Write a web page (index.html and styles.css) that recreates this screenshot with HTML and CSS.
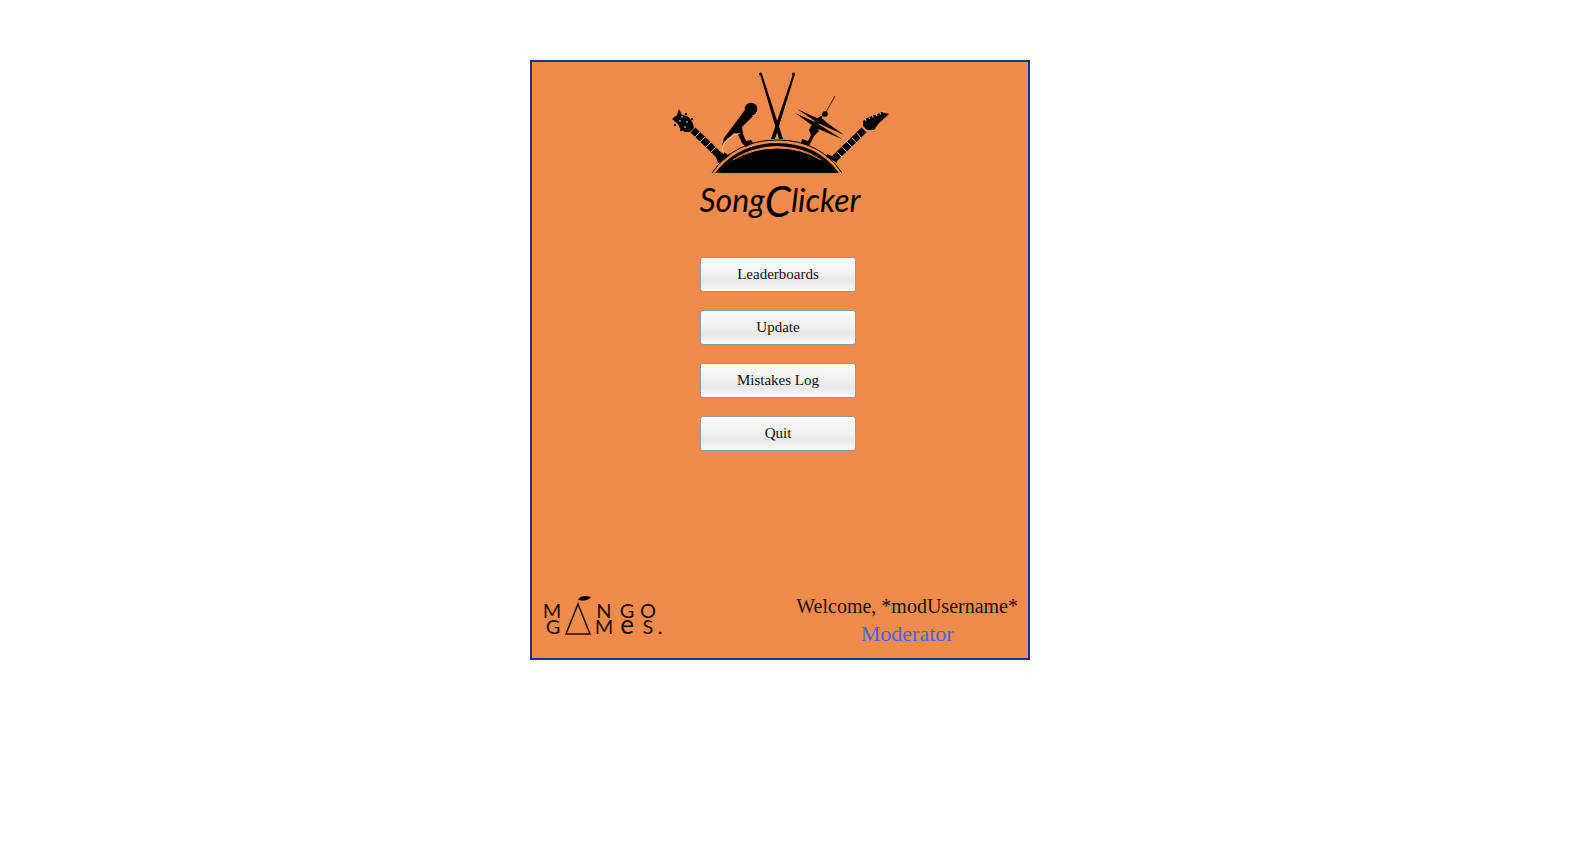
FILE: index.html
```html
<!DOCTYPE html>
<html lang="en">
<head>
<meta charset="utf-8">
<title>SongClicker</title>
<link rel="stylesheet" href="styles.css">
</head>
<body>
<main class="panel">
  <header class="brand">
    <svg class="emblem" viewBox="669 70 222 104" role="img" aria-label="Drum, guitars, microphone and cymbals">
      <!-- drum -->
      <path d="M718 173Q737 149 777 148Q818 149 837 173Z"/>
      <path class="line" d="M712 173Q735 140 777 140Q820 140 842 173"/>
      <path d="M715 173Q738 143 777 143Q817 143 839 173H837Q814 147 777 146Q740 147 718 173Z"/>
      <path class="rim" d="M733 160Q753 148 777 148Q802 148 821 160"/>
      <!-- drumsticks -->
      <path d="M760 74L762 74L783 139H779Z M793 74L795 74L775 139H771Z"/>
      <circle cx="760.500" cy="74" r="1.600"/><circle cx="793.500" cy="74" r="1.600"/>
      <!-- left guitar -->
      <path d="M679 109L682 115L687 116Q693 120 694 128L690 132L685 132Q680 130 678 124L672 119L677 115Z"/>
      <path class="neck" d="M693 130L723 159"/>
      <path class="fret" d="M695 137L700 132M700 142L705 137M706 147L711 142M711 152L716 147"/>
      <path d="M716 157L724 152L728 155L730 153L729 156L722 161L718 163Z"/>
      <g class="dot"><circle cx="682" cy="117" r="0.800"/><circle cx="680" cy="121" r="0.800"/><circle cx="687" cy="122" r="0.800"/><circle cx="685" cy="127" r="0.800"/></g>
      <path d="M685 113h2v2h-2zM691 118h2v2h-2zM674 124h2v2h-2zM680 129h2v2h-2z"/>
      <!-- microphone -->
      <circle cx="751" cy="109" r="6.300"/>
      <path d="M745 110L753 116L742 127L743 134L746 141L751 140L753 143L746 147L742 143L738 134L734 133L724 142L722 146L724 138Z"/>
      <path class="pale" d="M740 133Q734 134 727 140Q720 148 724 154"/>
      <!-- cymbals -->
      <path class="thin" d="M835 96L826 112"/>
      <circle cx="825" cy="114" r="2.800"/>
      <path d="M797 109L817 118Q821 116 826 122L844 135L818 123Z"/>
      <path d="M795 113L815 122L842 139L816 128Z"/>
      <path d="M824 114L821 119L817 127L819 131L814 136L809 146L801 143L802 139L808 141L811 135L809 130L811 126L818 118Z"/>
      <!-- right guitar -->
      <path d="M863 121L867 118L882 112L889 114L879 123L874 130L867 130L863 126Z"/>
      <path class="neck" d="M864 130L834 159"/>
      <path class="fret" d="M857 133L861 138M852 138L857 143M847 142L852 147M842 147L847 152M837 152L842 157"/>
      <path class="peg" d="M865 120L884 112"/>
      <path d="M827 154L832 156L836 157L837 163L832 160L826 157Z"/>
    </svg>
    <h1 class="wordmark">Song<span class="cap">C</span>licker</h1>
  </header>
  <nav class="menu">
    <button type="button">Leaderboards</button>
    <button type="button">Update</button>
    <button type="button">Mistakes Log</button>
    <button type="button">Quit</button>
  </nav>
  <footer class="foot">
    <svg class="studio" viewBox="540 594 124 48" role="img" aria-label="Mango Games">
      <path d="M578 600Q581 594 591 597Q587 602 579 600Z"/>
      <path class="line" d="M578 604L590 634H566Z"/>
      <text x="552" y="618">M</text><text x="604" y="618">N</text><text x="627" y="618">G</text><text x="648" y="618">O</text>
      <text x="553" y="634">G</text><text x="604" y="634">M</text><text class="round" x="627" y="634">e</text><text x="648" y="634">S</text><text x="660" y="634">.</text>
    </svg>
    <div class="user">
      <span class="welcome">Welcome, *modUsername*</span>
      <span class="role">Moderator</span>
    </div>
  </footer>
</main>
</body>
</html>
```
FILE: styles.css
```css
body {
  margin: 0;
  padding-right: 22px;
  background: #fff;
  font-family: "Liberation Serif", "Times New Roman", serif;
}
.panel {
  box-sizing: border-box;
  display: flex;
  flex-direction: column;
  width: 100%;
  max-width: 500px;
  min-height: 600px;
  margin: 60px auto;
  border: 2px solid #1c3487;
  background: #f08b4b;
}
.brand {
  display: flex;
  flex-direction: column;
  align-items: center;
  padding-top: 8px;
}
.emblem { width: 222px; height: 104px; }
.emblem .line { fill: none; stroke: #000; stroke-width: 1; }
.emblem .thin { fill: none; stroke: #3a2a20; stroke-width: 1; }
.emblem .pale { fill: none; stroke: #e5c5b0; stroke-width: 1; }
.emblem .rim { fill: none; stroke: #f08b4b; stroke-width: 1; }
.emblem .neck { stroke: #000; stroke-width: 7; }
.emblem .fret { stroke: #bbb; stroke-width: 1; }
.emblem .peg { fill: none; stroke: #ddd; stroke-width: 2; stroke-dasharray: 1 3; }
.emblem .dot { fill: #fff; }
.wordmark {
  margin: 4px 0 0;
  font-family: "Brush Script MT", Lato, sans-serif;
  font-size: 32px;
  font-style: italic;
  font-weight: 400;
  line-height: 44px;
}
.wordmark .cap {
  font-size: 42px;
  line-height: 32px;
  vertical-align: -5px;
}
.menu {
  display: flex;
  flex-direction: column;
  align-items: center;
  gap: 18px;
  padding: 35px 4px 0 0;
}
.menu button {
  width: 156px;
  height: 35px;
  padding: 0;
  border: 1px solid #999;
  border-radius: 3px;
  background: linear-gradient(#fafafa, #f2f2f2 45%, #e8e8e8 70%, #fafafa);
  font-family: inherit;
  font-size: 15px;
  color: #111;
}
.foot {
  display: flex;
  justify-content: space-between;
  align-items: flex-end;
  margin-top: auto;
  padding: 0 10px 10px 8px;
}
.studio { width: 124px; height: 48px; margin-bottom: 6px; }
.studio .line { fill: none; stroke: #1a0f08; stroke-width: 1.5; }
.studio text {
  font-family: Lato, sans-serif;
  font-size: 20px;
  font-weight: 400;
  text-anchor: middle;
  fill: #1a0f08;
}
.studio .round { font-size: 26px; }
.user {
  display: flex;
  flex-direction: column;
  align-items: center;
}
.welcome { font-size: 20px; line-height: 28px; color: #1c120c; }
.role { font-size: 22px; line-height: 28px; color: #4166f5; }
```
